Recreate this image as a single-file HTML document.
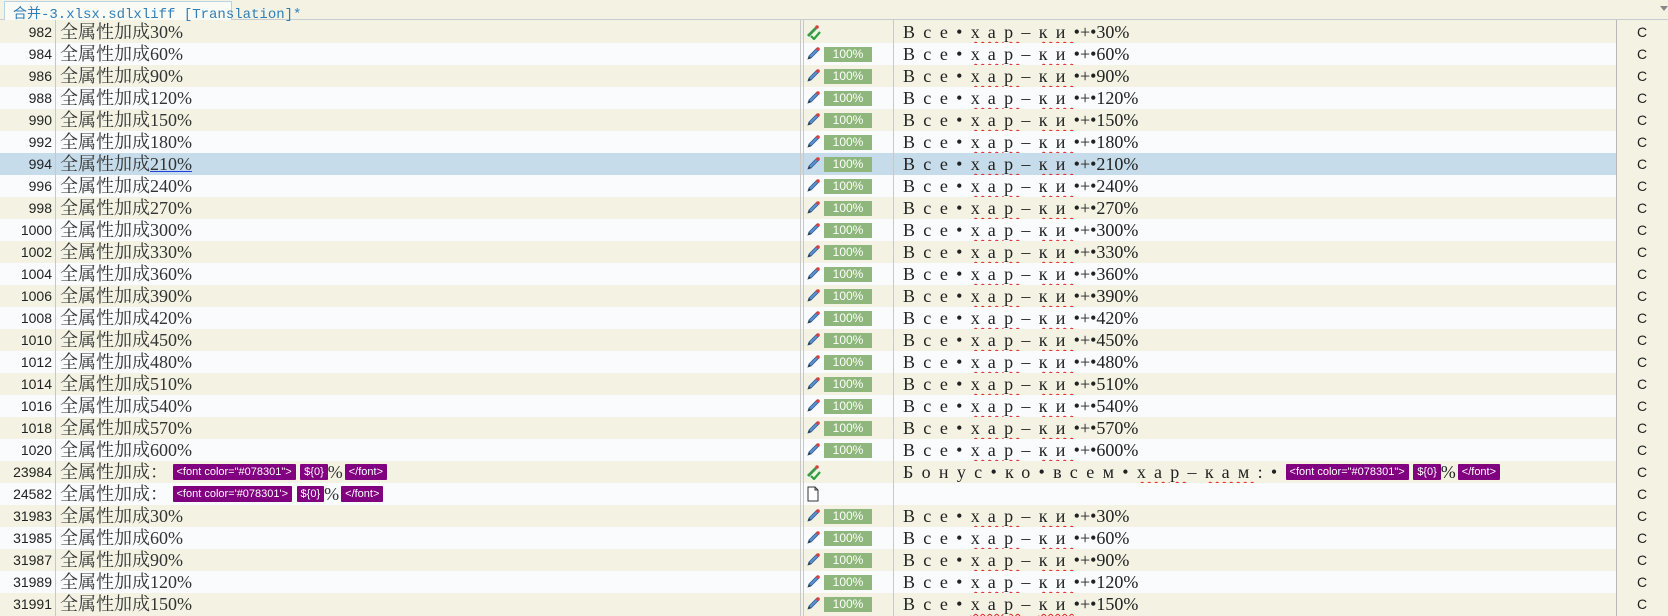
<!DOCTYPE html>
<html><head><meta charset="utf-8"><style>
*{margin:0;padding:0;box-sizing:border-box}
body{width:1668px;height:616px;overflow:hidden;background:#f4f3e3;position:relative;font-family:"Liberation Serif","Noto Serif CJK SC",serif}
.tabbar{position:absolute;left:0;top:0;width:1668px;height:20px;background:#f4f3e3;border-bottom:1px solid #c8ccd0}
.tab{position:absolute;left:4px;top:1px;width:228px;height:19px;background:#fbfbf6;border:1px solid #b9d3e4;border-bottom:none;color:#2f7fb8;font:14px "Liberation Mono","Noto Sans CJK SC",monospace;padding:1px 0 0 8px;white-space:nowrap}
.arrow{position:absolute;left:1660px;top:6px;width:0;height:0;border-left:4px solid transparent;border-right:4px solid transparent;border-top:5px solid #888}
.row{position:absolute;left:0;width:1668px;height:22px}
.d{background:#f4f3e3}
.w{background:#fafbfd}
.h{background:#c6dcea}
.n{position:absolute;left:0;width:52px;text-align:right;top:3px;font:14px "Liberation Sans",sans-serif;color:#222}
.s{position:absolute;left:60px;top:0;font-size:18px;line-height:22px;color:#333;white-space:nowrap;font-family:"Liberation Serif","Noto Serif CJK SC",serif}
.t{position:absolute;left:903px;top:0;font-size:18px;line-height:22px;color:#222;white-space:nowrap}
.sp{letter-spacing:8.3px}
.u{text-decoration:underline wavy #e02020;text-decoration-thickness:1px;text-underline-offset:3px}
.b{position:absolute;left:824px;top:4px;width:48px;height:15px;background:#8fb67c;color:#fff;font:12px "Liberation Sans",sans-serif;text-align:center;line-height:15px}
.c{position:absolute;left:1637px;top:3px;font:14px "Liberation Sans",sans-serif;color:#222}
.rc{position:absolute;left:1617px;top:0;width:51px;height:22px;background:#f4f3e3}
.ic{position:absolute;left:806px;top:3px}
.tag{display:inline-block;background:#800080;color:#fff;font:11px "Liberation Sans",sans-serif;padding:0 4px;height:16px;line-height:16px;vertical-align:3px;border-radius:1px}
.vl{position:absolute;top:20px;width:1px;height:596px;background:#c8c8c8}
</style></head><body>
<div class="tabbar"><div class="tab">合并-3.xlsx.sdlxliff [Translation]*</div><div class="arrow"></div></div>

<svg width="0" height="0" style="position:absolute"><defs>
<g id="pen"><path d="M2 13 L3 10 L11 2 L13 4 L5 12 Z" fill="#5a8fd0" stroke="#2f5f9a" stroke-width="0.8"/><circle cx="12" cy="3" r="1.8" fill="#d84040"/><path d="M2 13 L3 10 L5 12 Z" fill="#333"/></g>
<g id="chk"><path d="M1 11 L9 3 L11 5 L3 13 Z" fill="#3a9a4a"/><circle cx="11" cy="3" r="1.8" fill="#d84040"/><path d="M5 12 L8 15 L14 8" fill="none" stroke="#2aa040" stroke-width="2.2"/></g>
</defs></svg>

<div id="rows"></div>

<div class="row d" style="top:21px"><span class="n">982</span><span class="s">全属性加成30%</span><svg class="ic" width="16" height="16"><use href="#chk"/></svg><span class="t"><span class="sp">Все•<span class="u">хар</span>–<span class="u">ки</span></span>•+•30%</span><div class="rc"></div><span class="c">C</span></div>
<div class="row w" style="top:43px"><span class="n">984</span><span class="s">全属性加成60%</span><svg class="ic" width="16" height="16"><use href="#pen"/></svg><span class="b">100%</span><span class="t"><span class="sp">Все•<span class="u">хар</span>–<span class="u">ки</span></span>•+•60%</span><div class="rc"></div><span class="c">C</span></div>
<div class="row d" style="top:65px"><span class="n">986</span><span class="s">全属性加成90%</span><svg class="ic" width="16" height="16"><use href="#pen"/></svg><span class="b">100%</span><span class="t"><span class="sp">Все•<span class="u">хар</span>–<span class="u">ки</span></span>•+•90%</span><div class="rc"></div><span class="c">C</span></div>
<div class="row w" style="top:87px"><span class="n">988</span><span class="s">全属性加成120%</span><svg class="ic" width="16" height="16"><use href="#pen"/></svg><span class="b">100%</span><span class="t"><span class="sp">Все•<span class="u">хар</span>–<span class="u">ки</span></span>•+•120%</span><div class="rc"></div><span class="c">C</span></div>
<div class="row d" style="top:109px"><span class="n">990</span><span class="s">全属性加成150%</span><svg class="ic" width="16" height="16"><use href="#pen"/></svg><span class="b">100%</span><span class="t"><span class="sp">Все•<span class="u">хар</span>–<span class="u">ки</span></span>•+•150%</span><div class="rc"></div><span class="c">C</span></div>
<div class="row w" style="top:131px"><span class="n">992</span><span class="s">全属性加成180%</span><svg class="ic" width="16" height="16"><use href="#pen"/></svg><span class="b">100%</span><span class="t"><span class="sp">Все•<span class="u">хар</span>–<span class="u">ки</span></span>•+•180%</span><div class="rc"></div><span class="c">C</span></div>
<div class="row h" style="top:153px"><span class="n">994</span><span class="s">全属性加成<span style="text-decoration:underline;text-decoration-color:#2040e0">210%</span></span><svg class="ic" width="16" height="16"><use href="#pen"/></svg><span class="b">100%</span><span class="t"><span class="sp">Все•<span class="u">хар</span>–<span class="u">ки</span></span>•+•210%</span><div class="rc"></div><span class="c">C</span></div>
<div class="row w" style="top:175px"><span class="n">996</span><span class="s">全属性加成240%</span><svg class="ic" width="16" height="16"><use href="#pen"/></svg><span class="b">100%</span><span class="t"><span class="sp">Все•<span class="u">хар</span>–<span class="u">ки</span></span>•+•240%</span><div class="rc"></div><span class="c">C</span></div>
<div class="row d" style="top:197px"><span class="n">998</span><span class="s">全属性加成270%</span><svg class="ic" width="16" height="16"><use href="#pen"/></svg><span class="b">100%</span><span class="t"><span class="sp">Все•<span class="u">хар</span>–<span class="u">ки</span></span>•+•270%</span><div class="rc"></div><span class="c">C</span></div>
<div class="row w" style="top:219px"><span class="n">1000</span><span class="s">全属性加成300%</span><svg class="ic" width="16" height="16"><use href="#pen"/></svg><span class="b">100%</span><span class="t"><span class="sp">Все•<span class="u">хар</span>–<span class="u">ки</span></span>•+•300%</span><div class="rc"></div><span class="c">C</span></div>
<div class="row d" style="top:241px"><span class="n">1002</span><span class="s">全属性加成330%</span><svg class="ic" width="16" height="16"><use href="#pen"/></svg><span class="b">100%</span><span class="t"><span class="sp">Все•<span class="u">хар</span>–<span class="u">ки</span></span>•+•330%</span><div class="rc"></div><span class="c">C</span></div>
<div class="row w" style="top:263px"><span class="n">1004</span><span class="s">全属性加成360%</span><svg class="ic" width="16" height="16"><use href="#pen"/></svg><span class="b">100%</span><span class="t"><span class="sp">Все•<span class="u">хар</span>–<span class="u">ки</span></span>•+•360%</span><div class="rc"></div><span class="c">C</span></div>
<div class="row d" style="top:285px"><span class="n">1006</span><span class="s">全属性加成390%</span><svg class="ic" width="16" height="16"><use href="#pen"/></svg><span class="b">100%</span><span class="t"><span class="sp">Все•<span class="u">хар</span>–<span class="u">ки</span></span>•+•390%</span><div class="rc"></div><span class="c">C</span></div>
<div class="row w" style="top:307px"><span class="n">1008</span><span class="s">全属性加成420%</span><svg class="ic" width="16" height="16"><use href="#pen"/></svg><span class="b">100%</span><span class="t"><span class="sp">Все•<span class="u">хар</span>–<span class="u">ки</span></span>•+•420%</span><div class="rc"></div><span class="c">C</span></div>
<div class="row d" style="top:329px"><span class="n">1010</span><span class="s">全属性加成450%</span><svg class="ic" width="16" height="16"><use href="#pen"/></svg><span class="b">100%</span><span class="t"><span class="sp">Все•<span class="u">хар</span>–<span class="u">ки</span></span>•+•450%</span><div class="rc"></div><span class="c">C</span></div>
<div class="row w" style="top:351px"><span class="n">1012</span><span class="s">全属性加成480%</span><svg class="ic" width="16" height="16"><use href="#pen"/></svg><span class="b">100%</span><span class="t"><span class="sp">Все•<span class="u">хар</span>–<span class="u">ки</span></span>•+•480%</span><div class="rc"></div><span class="c">C</span></div>
<div class="row d" style="top:373px"><span class="n">1014</span><span class="s">全属性加成510%</span><svg class="ic" width="16" height="16"><use href="#pen"/></svg><span class="b">100%</span><span class="t"><span class="sp">Все•<span class="u">хар</span>–<span class="u">ки</span></span>•+•510%</span><div class="rc"></div><span class="c">C</span></div>
<div class="row w" style="top:395px"><span class="n">1016</span><span class="s">全属性加成540%</span><svg class="ic" width="16" height="16"><use href="#pen"/></svg><span class="b">100%</span><span class="t"><span class="sp">Все•<span class="u">хар</span>–<span class="u">ки</span></span>•+•540%</span><div class="rc"></div><span class="c">C</span></div>
<div class="row d" style="top:417px"><span class="n">1018</span><span class="s">全属性加成570%</span><svg class="ic" width="16" height="16"><use href="#pen"/></svg><span class="b">100%</span><span class="t"><span class="sp">Все•<span class="u">хар</span>–<span class="u">ки</span></span>•+•570%</span><div class="rc"></div><span class="c">C</span></div>
<div class="row w" style="top:439px"><span class="n">1020</span><span class="s">全属性加成600%</span><svg class="ic" width="16" height="16"><use href="#pen"/></svg><span class="b">100%</span><span class="t"><span class="sp">Все•<span class="u">хар</span>–<span class="u">ки</span></span>•+•600%</span><div class="rc"></div><span class="c">C</span></div>
<div class="row d" style="top:461px"><span class="n">23984</span><span class="s">全属性加成：&nbsp;<span class="tag">&lt;font color="#078301"&gt;</span> <span class="tag">${0}</span>%<span class="tag" style="margin-left:2px">&lt;/font&gt;</span></span><svg class="ic" width="16" height="16"><use href="#chk"/></svg><span class="t"><span class="sp">Бонус•ко•всем•<span class="u">хар</span>–<span class="u">кам</span>:•</span><span class="tag">&lt;font color="#078301"&gt;</span> <span class="tag">${0}</span>%<span class="tag" style="margin-left:2px">&lt;/font&gt;</span></span><div class="rc"></div><span class="c">C</span></div>
<div class="row w" style="top:483px"><span class="n">24582</span><span class="s">全属性加成：&nbsp;<span class="tag">&lt;font color='#078301'&gt;</span> <span class="tag">${0}</span>%<span class="tag" style="margin-left:2px">&lt;/font&gt;</span></span><svg class="ic" width="16" height="16"><path d="M2 1 H9 L12 4 V15 H2 Z" fill="#fff" stroke="#333"/><path d="M9 1 V4 H12" fill="none" stroke="#333"/></svg><div class="rc"></div><span class="c">C</span></div>
<div class="row d" style="top:505px"><span class="n">31983</span><span class="s">全属性加成30%</span><svg class="ic" width="16" height="16"><use href="#pen"/></svg><span class="b">100%</span><span class="t"><span class="sp">Все•<span class="u">хар</span>–<span class="u">ки</span></span>•+•30%</span><div class="rc"></div><span class="c">C</span></div>
<div class="row w" style="top:527px"><span class="n">31985</span><span class="s">全属性加成60%</span><svg class="ic" width="16" height="16"><use href="#pen"/></svg><span class="b">100%</span><span class="t"><span class="sp">Все•<span class="u">хар</span>–<span class="u">ки</span></span>•+•60%</span><div class="rc"></div><span class="c">C</span></div>
<div class="row d" style="top:549px"><span class="n">31987</span><span class="s">全属性加成90%</span><svg class="ic" width="16" height="16"><use href="#pen"/></svg><span class="b">100%</span><span class="t"><span class="sp">Все•<span class="u">хар</span>–<span class="u">ки</span></span>•+•90%</span><div class="rc"></div><span class="c">C</span></div>
<div class="row w" style="top:571px"><span class="n">31989</span><span class="s">全属性加成120%</span><svg class="ic" width="16" height="16"><use href="#pen"/></svg><span class="b">100%</span><span class="t"><span class="sp">Все•<span class="u">хар</span>–<span class="u">ки</span></span>•+•120%</span><div class="rc"></div><span class="c">C</span></div>
<div class="row d" style="top:593px"><span class="n">31991</span><span class="s">全属性加成150%</span><svg class="ic" width="16" height="16"><use href="#pen"/></svg><span class="b">100%</span><span class="t"><span class="sp">Все•<span class="u">хар</span>–<span class="u">ки</span></span>•+•150%</span><div class="rc"></div><span class="c">C</span></div>

<div class="vl" style="left:55px"></div>
<div class="vl" style="left:800px"></div>
<div class="vl" style="left:803px"></div>
<div class="vl" style="left:893px"></div>
<div class="vl" style="left:1616px;background:#b8b8b8"></div>
</body></html>
